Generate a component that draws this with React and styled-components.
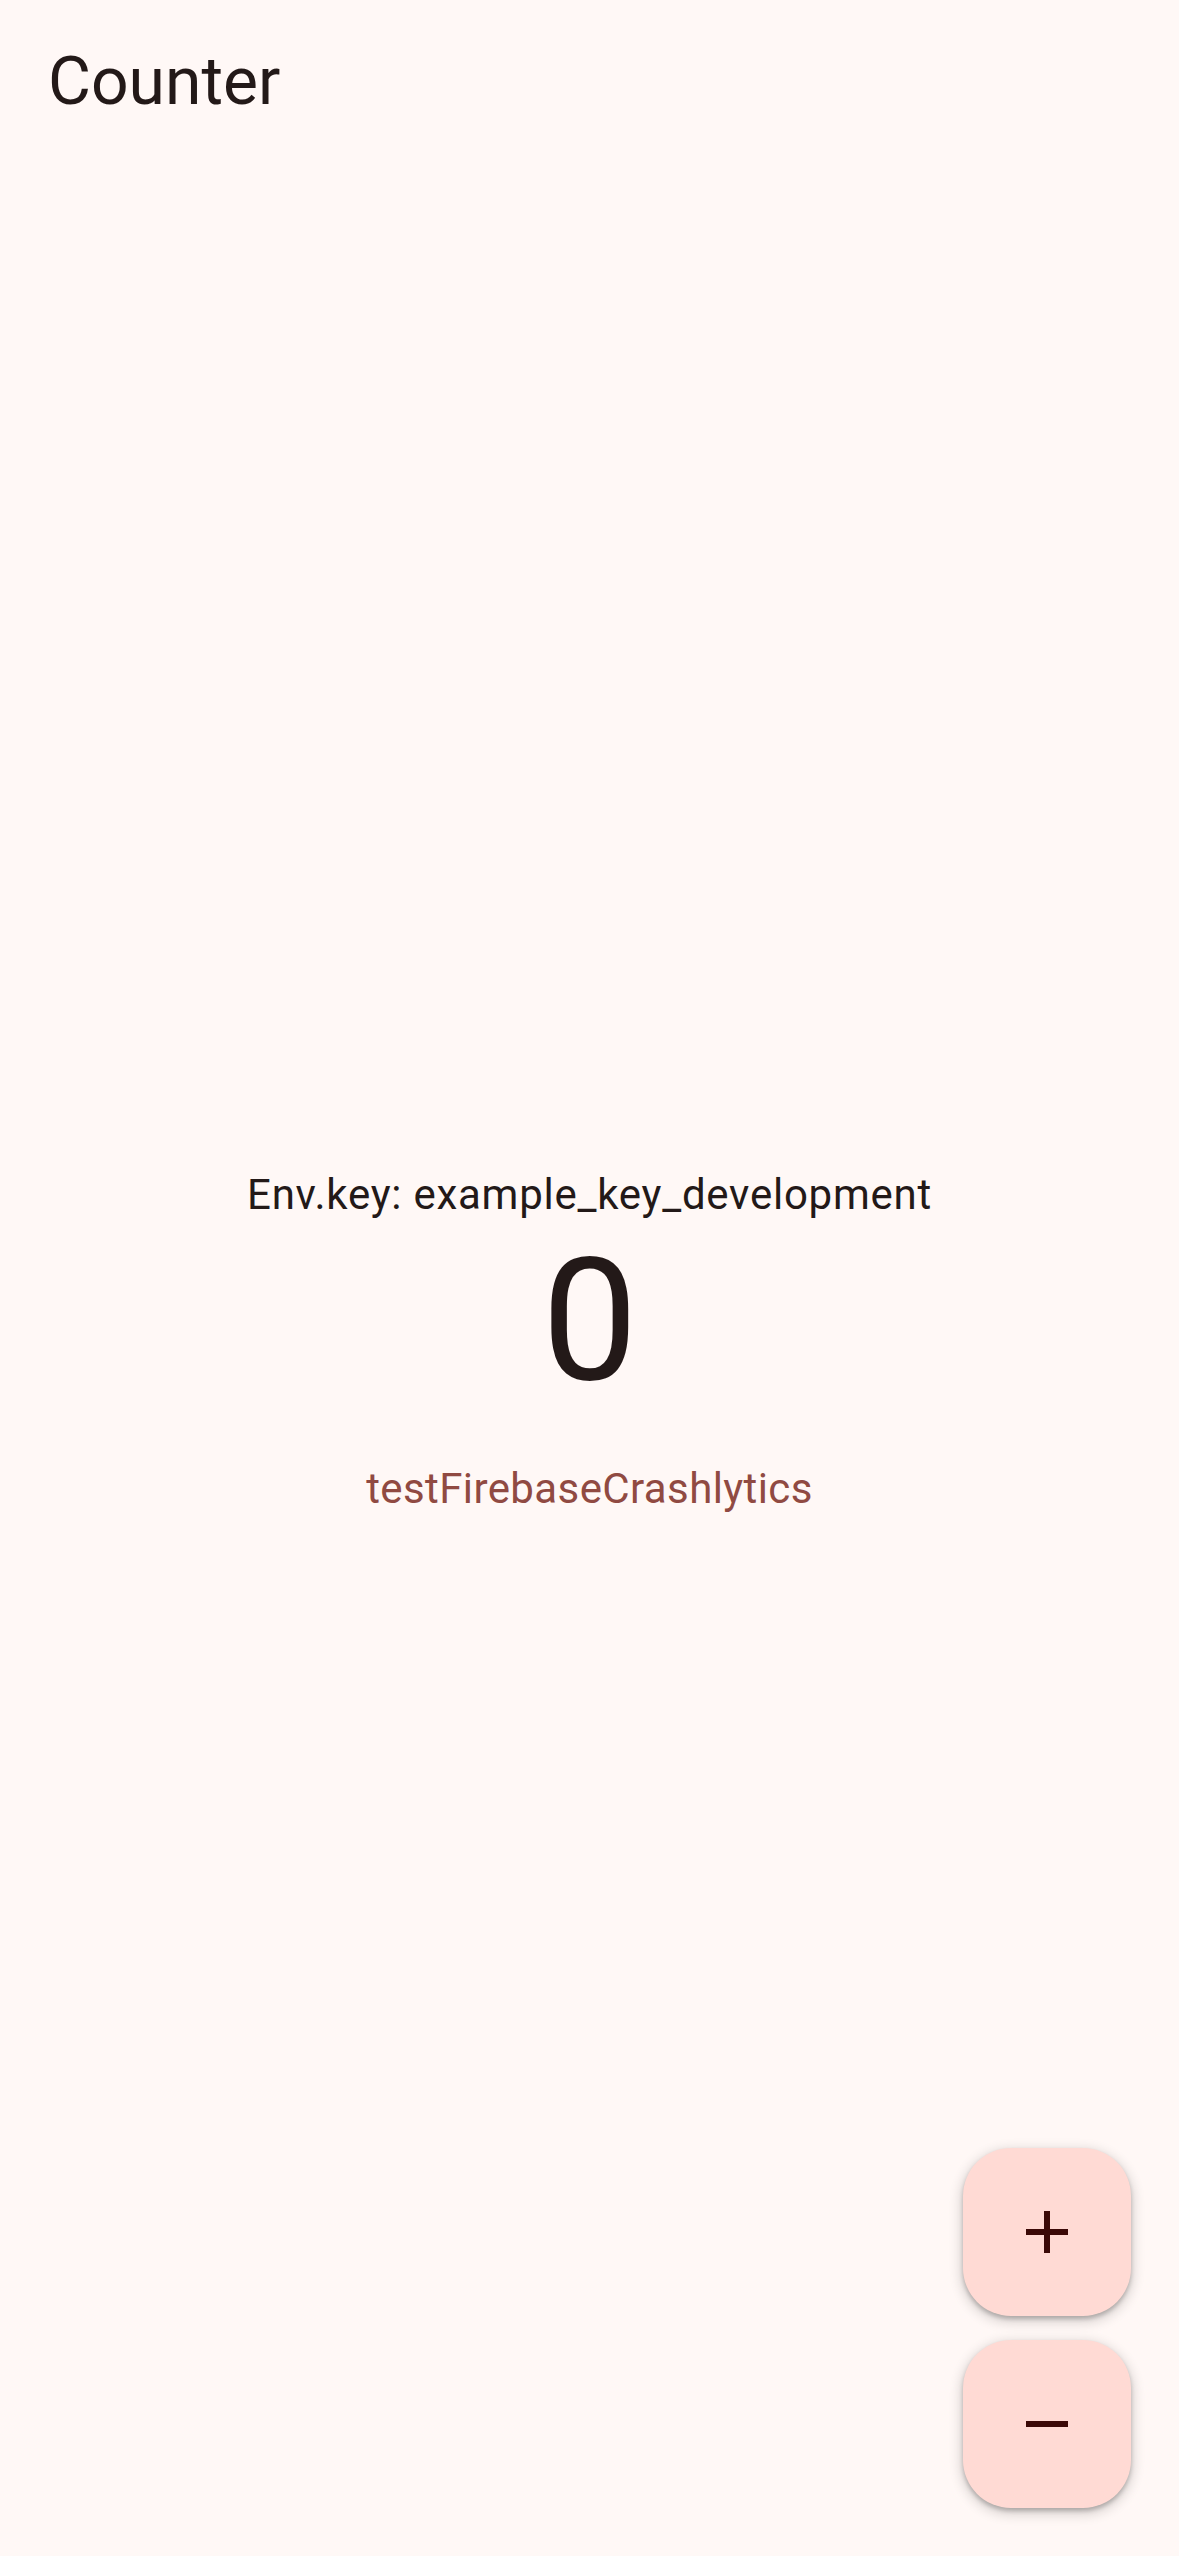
import React, { useState } from 'react';
import styled, { createGlobalStyle } from 'styled-components';

const GlobalStyle = createGlobalStyle`
  html, body {
    margin: 0;
    padding: 0;
    background: #fff8f6;
  }
  body {
    font-family: Roboto, "Noto Sans", "Liberation Sans", sans-serif;
    color: #231918;
  }
`;

const Screen = styled.div`
  min-height: 100vh;
  display: flex;
  flex-direction: column;
  background: #fff8f6;
  position: relative;
`;

const AppBar = styled.header`
  height: 164px;
  display: flex;
  align-items: center;
  padding: 0 48px;
  flex-shrink: 0;
`;

const Title = styled.h1`
  margin: 0;
  font-size: 66px;
  line-height: 84px;
  font-weight: 400;
  color: #231918;
`;

const Main = styled.main`
  flex: 1;
  display: flex;
  flex-direction: column;
  align-items: center;
  justify-content: center;
  padding-top: 6px;
`;

const EnvText = styled.p`
  margin: 0;
  font-size: 42px;
  line-height: 60px;
  letter-spacing: 0.75px;
  color: #231918;
`;

const Count = styled.div`
  font-size: 171px;
  line-height: 192px;
  letter-spacing: -0.5px;
  color: #231918;
`;

const TextButton = styled.button`
  height: 144px;
  padding: 0 36px;
  border: none;
  background: transparent;
  font-family: inherit;
  font-size: 42px;
  line-height: 60px;
  font-weight: 400;
  letter-spacing: 0.4px;
  color: #904a42;
  cursor: pointer;
`;

const FabStack = styled.div`
  position: absolute;
  right: 48px;
  bottom: 48px;
  display: flex;
  flex-direction: column;
  gap: 24px;
`;

const Fab = styled.button`
  width: 168px;
  height: 168px;
  border: none;
  border-radius: 48px;
  background: #ffdad4;
  color: #3b0907;
  display: flex;
  align-items: center;
  justify-content: center;
  padding: 0;
  cursor: pointer;
  box-shadow: 0 4px 12px 3px rgba(0, 0, 0, 0.14), 0 3px 4px rgba(0, 0, 0, 0.22);
`;

const AddIcon = () => (
  <svg width="72" height="72" viewBox="0 0 24 24" fill="currentColor">
    <path d="M19 13h-6v6h-2v-6H5v-2h6V5h2v6h6v2z" />
  </svg>
);

const RemoveIcon = () => (
  <svg width="72" height="72" viewBox="0 0 24 24" fill="currentColor">
    <path d="M19 13H5v-2h14v2z" />
  </svg>
);

const App = () => {
  const [count, setCount] = useState(0);

  return (
    <Screen>
      <GlobalStyle />
      <AppBar>
        <Title>Counter</Title>
      </AppBar>
      <Main>
        <EnvText>Env.key: example_key_development</EnvText>
        <Count>{count}</Count>
        <TextButton>testFirebaseCrashlytics</TextButton>
      </Main>
      <FabStack>
        <Fab aria-label="increment" onClick={() => setCount(c => c + 1)}>
          <AddIcon />
        </Fab>
        <Fab aria-label="decrement" onClick={() => setCount(c => c - 1)}>
          <RemoveIcon />
        </Fab>
      </FabStack>
    </Screen>
  );
};

export default App;
